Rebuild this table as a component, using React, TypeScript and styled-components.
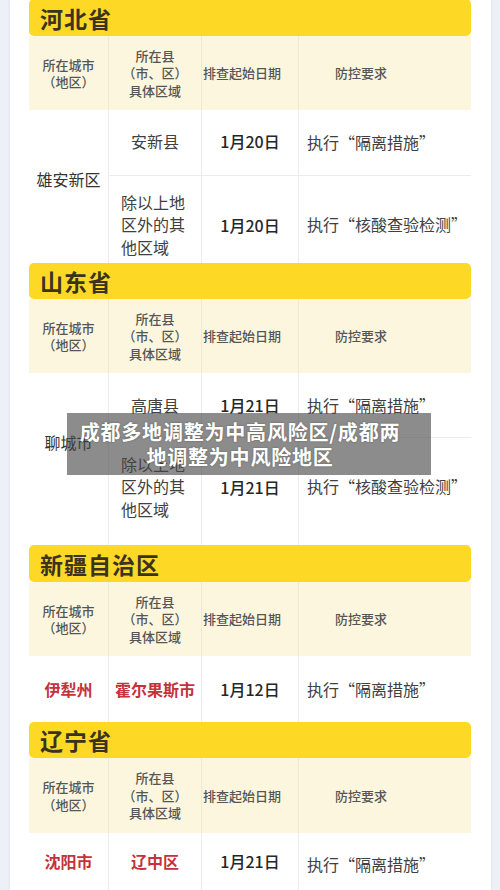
import React from 'react'
import styled, { createGlobalStyle } from 'styled-components'

const Global = createGlobalStyle`
  body {
    margin: 0;
    background: #eef0f8;
    font-family: "Noto Sans CJK SC", "Noto Sans", sans-serif;
    overflow: hidden;
  }
`

const Page = styled.div`
  position: relative;
  width: 500px;
  height: 890px;
  overflow: hidden;
`

const Card = styled.div`
  margin: -1px 0 0 10px;
  width: 481px;
  box-sizing: border-box;
  padding: 0 20px 0 19px;
  background: #fff;
  box-shadow: 0 0 3px rgba(120, 130, 170, 0.18);
`

const Bar = styled.div<{ h: number }>`
  height: ${p => p.h}px;
  display: flex;
  align-items: center;
  padding-left: 11px;
  background: #fdd926;
  border-radius: 5px;
  font-size: 23px;
  font-weight: 700;
  color: #3b3320;
  letter-spacing: 1px;
`

const Table = styled.div`
  display: grid;
  grid-template-columns: 79px 93px 97px 173px;
`

const HeadCell = styled.div<{ h: number; align?: string; pl?: number }>`
  height: ${p => p.h}px;
  box-sizing: border-box;
  display: flex;
  align-items: center;
  justify-content: ${p => p.align || 'center'};
  padding-left: ${p => p.pl || 0}px;
  background: #fdf6de;
  border-left: 1px solid rgba(0, 0, 0, 0.05);
  font-size: 13px;
  line-height: 17.5px;
  font-weight: 500;
  color: #555;
  text-align: center;
  white-space: pre-line;
  &:first-child {
    border-left: none;
  }
`

const CityCell = styled.div<{ span: number }>`
  grid-row: span ${p => p.span};
  box-sizing: border-box;
  padding-top: 58px;
  text-align: center;
  font-size: 16px;
  line-height: 22px;
  color: #333;
`

const Cell = styled.div<{
  h: number
  first?: boolean
  align?: string
  pt?: number
  pb?: number
  pl?: number
  red?: boolean
  date?: boolean
}>`
  height: ${p => p.h}px;
  box-sizing: border-box;
  display: flex;
  align-items: center;
  justify-content: ${p => p.align || 'flex-start'};
  padding: ${p => p.pt || 0}px 0 ${p => p.pb || 0}px ${p => p.pl || 0}px;
  border-left: 1px solid #ececec;
  border-top: ${p => (p.first ? 'none' : '1px solid #ececec')};
  font-size: 16px;
  line-height: 22.5px;
  white-space: pre-line;
  color: ${p => (p.red ? '#c5323b' : p.date ? '#262626' : '#404040')};
  font-weight: ${p => (p.red ? 600 : p.date ? 500 : 400)};
`

const RedCity = styled.div<{ pb?: number }>`
  display: flex;
  align-items: center;
  justify-content: center;
  padding-bottom: ${p => p.pb || 0}px;
  font-size: 16px;
  font-weight: 600;
  color: #c5323b;
`

const Caption = styled.div`
  position: absolute;
  left: 67px;
  top: 413px;
  width: 364px;
  height: 62px;
  box-sizing: border-box;
  padding: 6px 29px 0 11px;
  background: rgba(70, 70, 70, 0.62);
  color: #fff;
  font-size: 20px;
  font-weight: 700;
  line-height: 25px;
  letter-spacing: 0.8px;
  text-align: center;
  text-shadow: 0 0 2px rgba(0, 0, 0, 0.35);
`

type Row = { area: string; date: string; rule: string; h: number; pt?: number; pb?: number; multi?: boolean }

type Section = {
  name: string
  barH: number
  headH: number
  city: string
  red?: boolean
  rows: Row[]
}

const sections: Section[] = [
  {
    name: '河北省',
    barH: 37,
    headH: 74,
    city: '雄安新区',
    rows: [
      { area: '安新县', date: '1月20日', rule: '执行“隔离措施”', h: 65, pb: 2 },
      { area: '除以上地\n区外的其\n他区域', date: '1月20日', rule: '执行“核酸查验检测”', h: 88, pt: 15, pb: 5, multi: true },
    ],
  },
  {
    name: '山东省',
    barH: 36,
    headH: 74,
    city: '聊城市',
    rows: [
      { area: '高唐县', date: '1月21日', rule: '执行“隔离措施”', h: 64 },
      { area: '除以上地\n区外的其\n他区域', date: '1月21日', rule: '执行“核酸查验检测”', h: 108, pt: 15, pb: 25, multi: true },
    ],
  },
  {
    name: '新疆自治区',
    barH: 37,
    headH: 74,
    city: '伊犁州',
    red: true,
    rows: [{ area: '霍尔果斯市', date: '1月12日', rule: '执行“隔离措施”', h: 66 }],
  },
  {
    name: '辽宁省',
    barH: 36,
    headH: 75,
    city: '沈阳市',
    red: true,
    rows: [{ area: '辽中区', date: '1月21日', rule: '执行“隔离措施”', h: 62, pb: 6 }],
  },
]

const ProvinceBlock: React.FC<{ s: Section }> = ({ s }) => (
  <>
    <Bar h={s.barH}>{s.name}</Bar>
    <Table>
      <HeadCell h={s.headH}>{'所在城市\n（地区）'}</HeadCell>
      <HeadCell h={s.headH}>{'所在县\n（市、区）\n具体区域'}</HeadCell>
      <HeadCell h={s.headH} align="flex-start" pl={1}>排查起始日期</HeadCell>
      <HeadCell h={s.headH} align="flex-start" pl={36}>防控要求</HeadCell>

      {s.red ? (
        <RedCity pb={s.rows[0].pb}>{s.city}</RedCity>
      ) : (
        <CityCell span={s.rows.length}>{s.city}</CityCell>
      )}
      {s.rows.map((r, i) => (
        <React.Fragment key={i}>
          <Cell
            h={r.h}
            first={i === 0}
            align={r.multi ? 'flex-start' : 'center'}
            pl={r.multi ? 12 : 0}
            pt={r.pt}
            pb={r.pb}
            red={s.red}
            style={i > 0 ? { gridColumn: 2 } : undefined}
          >
            {r.area}
          </Cell>
          <Cell h={r.h} first={i === 0} align="center" pt={r.pt ? r.pt + 2 : 0} pb={r.pb} date>
            {r.date}
          </Cell>
          <Cell h={r.h} first={i === 0} pl={8} pt={r.pt} pb={r.multi ? r.pb : 0}>
            {r.rule}
          </Cell>
        </React.Fragment>
      ))}
    </Table>
  </>
)

export default function App() {
  return (
    <Page>
      <Global />
      <Card>
        {sections.map(s => (
          <ProvinceBlock key={s.name} s={s} />
        ))}
      </Card>
      <Caption>
        成都多地调整为中高风险区/成都两
        <br />
        地调整为中风险地区
      </Caption>
    </Page>
  )
}
